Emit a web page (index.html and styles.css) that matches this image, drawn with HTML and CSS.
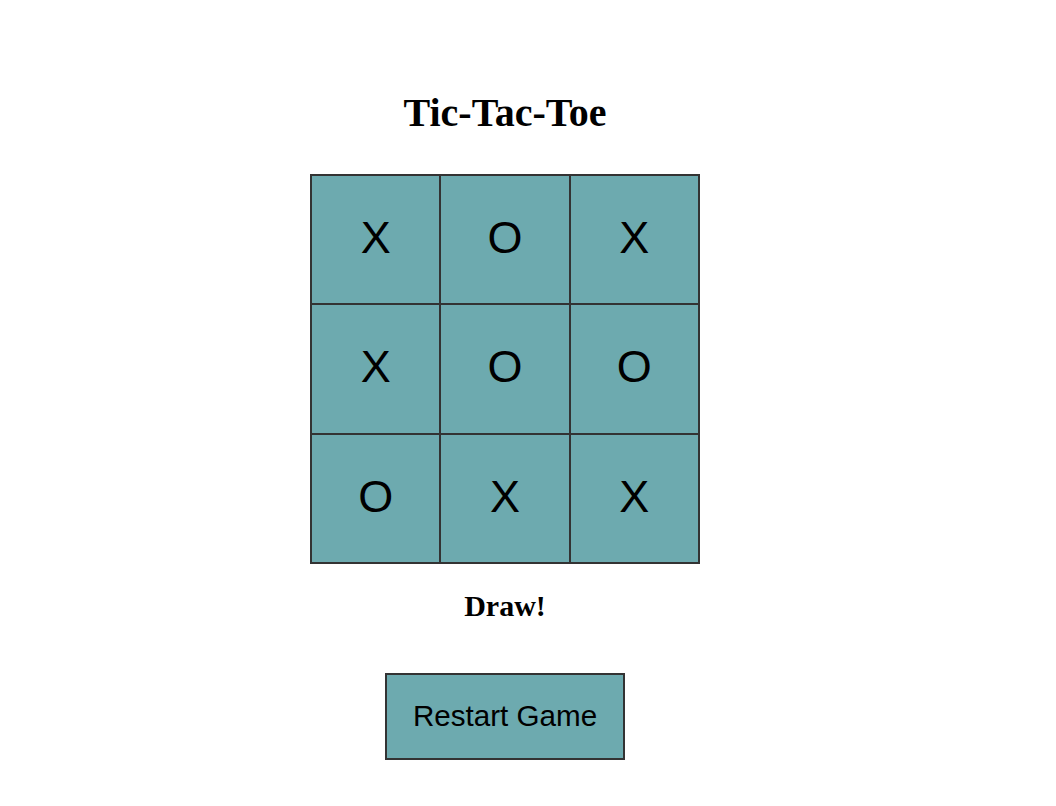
FILE: index.html
```html
<!DOCTYPE html>
<html lang="en">
<head>
  <meta charset="UTF-8" />
  <meta name="viewport" content="width=device-width, initial-scale=1.0"/>
  <title>Tic-Tac-Toe</title>
  <link rel="stylesheet" href="styles.css">
</head>
<body>

  <div class="game">
    <h1>Tic-Tac-Toe</h1>
    <div class="board" id="board">
      <div class="cell" data-index="0">X</div>
      <div class="cell" data-index="1">O</div>
      <div class="cell" data-index="2">X</div>
      <div class="cell" data-index="3">X</div>
      <div class="cell" data-index="4">O</div>
      <div class="cell" data-index="5">O</div>
      <div class="cell" data-index="6">O</div>
      <div class="cell" data-index="7">X</div>
      <div class="cell" data-index="8">X</div>
    </div>
    <h2 class="status" id="status">Draw!</h2>
    <button class="restart" onclick="restartGame()">Restart Game</button>
  </div>

  <script>
    const cells = document.querySelectorAll('.cell');
    const statusText = document.getElementById('status');
    let current = 'X';
    let over = true;

    const lines = [
      [0, 1, 2], [3, 4, 5], [6, 7, 8],
      [0, 3, 6], [1, 4, 7], [2, 5, 8],
      [0, 4, 8], [2, 4, 6]
    ];

    cells.forEach(cell => {
      cell.addEventListener('click', () => {
        if (over || cell.innerText !== '') return;
        cell.innerText = current;
        checkResult();
        current = current === 'X' ? 'O' : 'X';
      });
    });

    function checkResult() {
      const values = Array.from(cells).map(c => c.innerText);
      for (const [a, b, c] of lines) {
        if (values[a] && values[a] === values[b] && values[a] === values[c]) {
          statusText.innerText = values[a] + ' wins!';
          over = true;
          return;
        }
      }
      if (values.every(v => v !== '')) {
        statusText.innerText = 'Draw!';
        over = true;
      }
    }

    function restartGame() {
      cells.forEach(c => c.innerText = '');
      current = 'X';
      over = false;
      statusText.innerText = '';
    }
  </script>
</body>
</html>
```

FILE: styles.css
```css
body {
  margin: 0;
  font-family: "Liberation Serif", "Times New Roman", serif;
  background: #fff;
}

.game {
  width: 1010px;
  display: flex;
  flex-direction: column;
  align-items: center;
}

h1 {
  font-size: 40px;
  line-height: 46px;
  margin: 90px 0 38px;
}

.board {
  width: 390px;
  height: 390px;
  box-sizing: border-box;
  display: grid;
  grid-template-columns: repeat(3, 1fr);
  grid-template-rows: repeat(3, 1fr);
  gap: 2px;
  padding: 2px;
  background-color: #333;
}

.cell {
  background-color: #6daaaf;
  display: flex;
  justify-content: center;
  align-items: center;
  padding-bottom: 3px;
  font-family: "Liberation Sans", Arial, sans-serif;
  font-size: 45px;
  cursor: pointer;
}

.status {
  font-size: 30px;
  line-height: 34px;
  min-height: 34px;
  margin: 25px 0 50px;
}

.restart {
  font-family: "Liberation Sans", Arial, sans-serif;
  font-size: 29.6px;
  line-height: 33px;
  padding: 24px 26px 26px;
  background-color: #6daaaf;
  color: #000;
  border: 2px solid #333;
  cursor: pointer;
}
```
